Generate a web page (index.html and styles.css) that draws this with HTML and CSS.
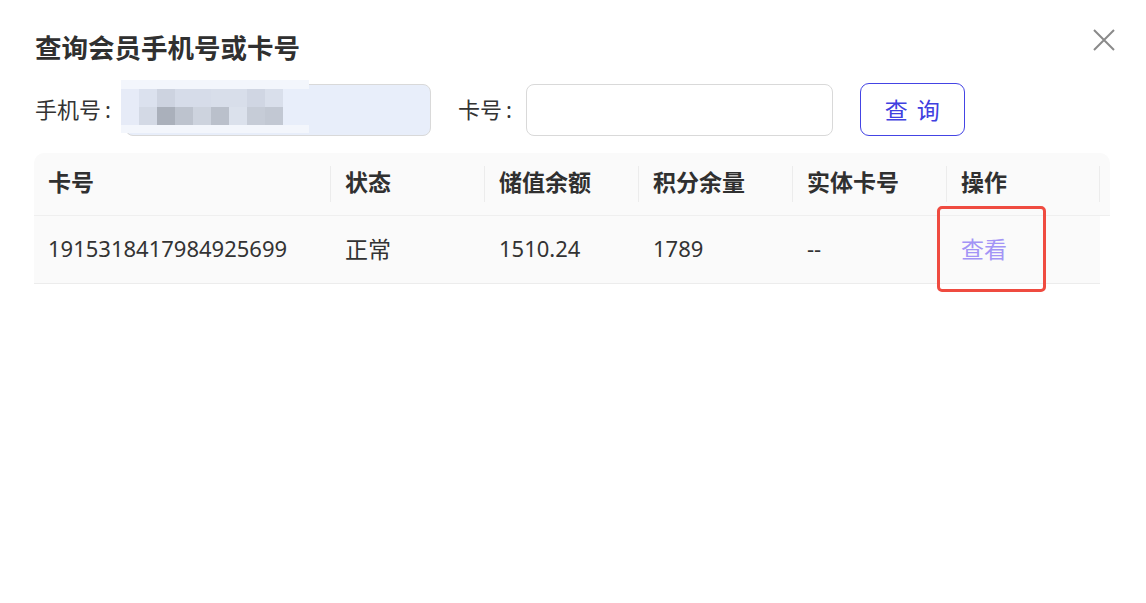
FILE: index.html
```html
<!DOCTYPE html>
<html lang="zh-CN">

<head>
    <meta charset="UTF-8">
    <meta name="viewport" content="width=device-width, initial-scale=1.0">
    <title>查询会员</title>
    <link rel="stylesheet" href="styles.css">
</head>

<body>
    <div class="dialog">
        <h2 class="title">查询会员手机号或卡号</h2>
        <span class="close">
            <svg width="22" height="22" viewBox="0 0 22 22">
                <path d="M1 1 L21 21 M21 1 L1 21" stroke="#8a8a8a" stroke-width="2" fill="none" />
            </svg>
        </span>

        <div class="search">
            <div class="field">
                <label>手机号<span class="colon">:</span></label>
                <div class="input-wrap">
                    <input class="input phone" type="text" value="" />
                    <div class="mosaic">
                        <span class="a"></span><span class="a"></span><span class="a"></span><span class="a"></span><span class="a"></span><span class="a"></span><span class="a"></span><span class="a"></span><span class="a"></span><span class="a"></span>
                        <span class="b"></span><span class="c"></span><span class="d"></span><span class="e"></span><span class="e"></span><span class="f"></span><span class="f"></span><span class="g"></span><span class="h"></span><span class="z"></span>
                        <span class="b"></span><span class="i"></span><span class="j"></span><span class="k"></span><span class="l"></span><span class="m"></span><span class="n"></span><span class="o"></span><span class="p"></span><span class="z"></span>
                        <span class="a"></span><span class="a"></span><span class="a"></span><span class="a"></span><span class="a"></span><span class="a"></span><span class="a"></span><span class="a"></span><span class="a"></span><span class="a"></span>
                    </div>
                </div>
            </div>
            <div class="field">
                <label>卡号<span class="colon">:</span></label>
                <input class="input card" type="text" />
            </div>
            <button class="btn">查 询</button>
        </div>

        <table class="members">
            <colgroup>
                <col style="width: 297px">
                <col style="width: 154px">
                <col style="width: 154px">
                <col style="width: 154px">
                <col style="width: 154px">
                <col style="width: 153px">
                <col style="width: 10px">
            </colgroup>
            <thead>
                <tr>
                    <th>卡号</th>
                    <th>状态</th>
                    <th>储值余额</th>
                    <th>积分余量</th>
                    <th>实体卡号</th>
                    <th>操作</th>
                    <th class="gutter"></th>
                </tr>
            </thead>
            <tbody>
                <tr>
                    <td>1915318417984925699</td>
                    <td class="cn">正常</td>
                    <td>1510.24</td>
                    <td>1789</td>
                    <td>--</td>
                    <td class="action">
                        <a class="link cn">查看</a>
                        <span class="mark"></span>
                    </td>
                    <td class="gutter"></td>
                </tr>
            </tbody>
        </table>
    </div>
</body>

</html>
```

FILE: styles.css
```css
body {
    margin: 0;
    background: #fff;
    font-family: "Noto Sans", "Noto Sans CJK SC", sans-serif;
    color: #333;
}

.dialog {
    position: relative;
    width: 1146px;
    height: 603px;
    padding: 0 34px;
    box-sizing: border-box;
}

.title {
    margin: 0;
    padding-top: 30px;
    padding-left: 1px;
    font-size: 26.5px;
    line-height: 36px;
    font-weight: 700;
    color: #303030;
}

.close {
    position: absolute;
    top: 29px;
    right: 31px;
    width: 22px;
    height: 22px;
}

.close svg {
    display: block;
}

.search {
    display: flex;
    align-items: center;
    gap: 27px;
    margin-top: 17px;
    padding-left: 1px;
}

.field {
    display: flex;
    align-items: center;
    gap: 14px;
}

.field label {
    font-size: 22px;
    line-height: 30px;
    padding-bottom: 2px;
    color: #333;
}

.colon {
    margin-left: 4px;
}

.input-wrap {
    position: relative;
}

.input {
    display: block;
    height: 52px;
    box-sizing: border-box;
    border: 1px solid #d9d9d9;
    border-radius: 8px;
    background: #fff;
    outline: none;
}

.phone {
    width: 306px;
    background: #e8eefa;
}

.card {
    width: 307px;
}

.mosaic {
    position: absolute;
    left: -4px;
    top: -4px;
    display: grid;
    grid-template-columns: repeat(9, 18px) 26px;
    grid-template-rows: 9px 18px 18px 8px;
}

.mosaic .a { background: #f3f6fc; }
.mosaic .b { background: #e6ebf7; }
.mosaic .c { background: #dbe1ee; }
.mosaic .d { background: #cdd3e0; }
.mosaic .e { background: #d6dce9; }
.mosaic .f { background: #d8deea; }
.mosaic .g { background: #d0d6e3; }
.mosaic .h { background: #d9dfeb; }
.mosaic .i { background: #d3d9e5; }
.mosaic .j { background: #aab0bb; }
.mosaic .k { background: #bdc3ce; }
.mosaic .l { background: #cdd3de; }
.mosaic .m { background: #bac0cb; }
.mosaic .n { background: #dbe1ec; }
.mosaic .o { background: #c6ccd7; }
.mosaic .p { background: #c2c8d3; }
.mosaic .z { background: #e8eefa; }

.btn {
    width: 105px;
    height: 53px;
    border: 1.5px solid #4444e4;
    border-radius: 9px;
    background: #fff;
    color: #4040e0;
    font-family: "Noto Sans", "Noto Sans CJK SC", sans-serif;
    font-size: 23px;
    word-spacing: 3px;
    padding: 0 0 1px;
}

.members {
    margin-top: 17px;
    width: 1076px;
    table-layout: fixed;
    border-collapse: separate;
    border-spacing: 0;
    font-size: 22px;
}

.members th {
    position: relative;
    height: 63px;
    box-sizing: border-box;
    padding: 0 14px 6px;
    text-align: left;
    font-size: 23px;
    font-weight: 700;
    color: #303030;
    background: #fafafa;
    border-bottom: 1px solid #efefef;
}

.members th:first-child {
    border-top-left-radius: 10px;
}

.members th.gutter {
    padding: 0;
    border-top-right-radius: 10px;
}

.members th::after {
    content: "";
    position: absolute;
    right: 0;
    top: 13px;
    width: 1px;
    height: 36px;
    background: #ececec;
}

.members th.gutter::after {
    display: none;
}

.members td {
    height: 68px;
    box-sizing: border-box;
    padding: 0 14px 3px;
    background: #fafafa;
    border-bottom: 1px solid #ececec;
    white-space: nowrap;
}

.members td.gutter {
    padding: 0;
    background: #fff;
    border-bottom: none;
}

.cn {
    font-size: 23px;
}

.action {
    position: relative;
}

.link {
    color: #a394f6;
    cursor: pointer;
}

.mark {
    position: absolute;
    left: -10px;
    top: -10px;
    width: 109px;
    height: 86px;
    box-sizing: border-box;
    border: 3px solid #ef4b40;
    border-radius: 5px;
}
```
